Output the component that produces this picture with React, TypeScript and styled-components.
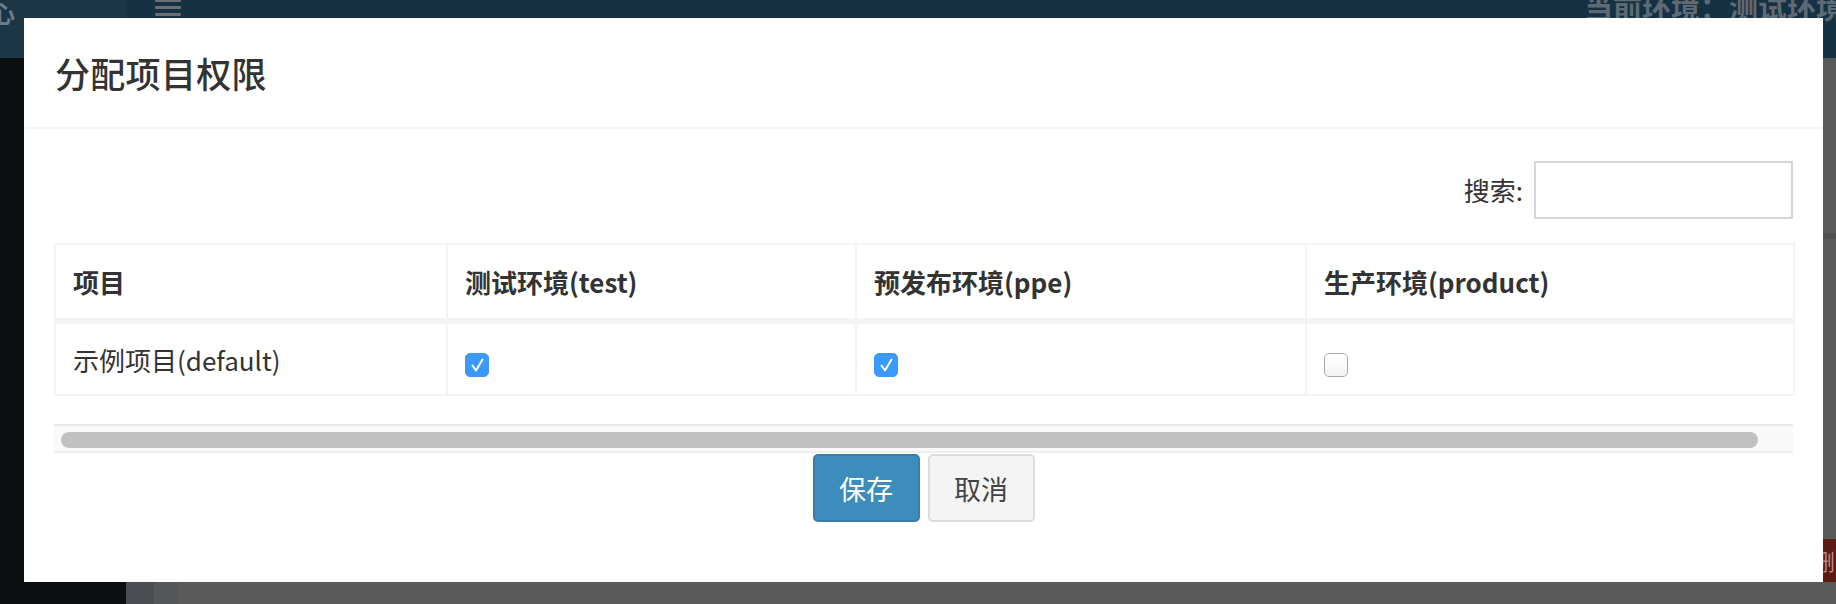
import React from "react";
import styled, { createGlobalStyle } from "styled-components";

const GlobalStyle = createGlobalStyle`
  html, body { margin: 0; padding: 0; }
  body {
    width: 1836px;
    height: 604px;
    overflow: hidden;
    background: #5a5a5a;
    font-family: "Noto Sans CJK SC", "Noto Sans", sans-serif;
  }
  * { box-sizing: border-box; }
`;

/* ---------- underlying (dimmed) application ---------- */

const Page = styled.div`
  position: relative;
  width: 1836px;
  height: 604px;
  overflow: hidden;
  display: grid;
  grid-template-rows: 58px 1fr;
`;

const Navbar = styled.header`
  display: flex;
  align-items: flex-start;
  background: #163143;
  overflow: hidden;
`;

const Logo = styled.div`
  width: 126px;
  height: 58px;
  flex: none;
  background: #1b3647;
  overflow: hidden;
  color: #6e7c86;
  font-size: 24px;
  font-weight: 700;
  line-height: 1;
  padding-top: 1px;
  span { display: inline-block; margin-left: -9px; }
`;

const Hamburger = styled.div`
  margin-left: 29px;
  width: 26px;
  flex: none;
  display: flex;
  flex-direction: column;
  gap: 4px;
  margin-top: -1px;
  i { display: block; height: 3px; border-radius: 1px; background: #6a6f73; }
`;

const EnvText = styled.div`
  margin-left: 1403px;
  margin-top: -14px;
  font-size: 29px;
  font-weight: 700;
  line-height: 40px;
  color: #5d6a73;
  white-space: nowrap;
`;

const Body = styled.div`
  display: grid;
  grid-template-columns: 126px 28px 24px 1fr;
`;

const Sidebar = styled.aside`
  background: #0b0f10;
`;

const Strip = styled.div<{ $c: string }>`
  background: ${(p) => p.$c};
`;

const Content = styled.main`
  display: flex;
  flex-direction: column;
  border-top: 1px solid #555;
`;

const PanelRow = styled.div`
  height: 180px;
  border-bottom: 6px solid #515151;
`;

const Toolbar = styled.div`
  margin-top: 300px;
  margin-right: -40px;
  display: flex;
  justify-content: flex-end;
  gap: 6px;
  border-left: 1px solid #525252;
  margin-left: 1363px;
  padding-left: 16px;
`;

const ToolButton = styled.div<{ $bg: string; $w: number }>`
  width: ${(p) => p.$w}px;
  height: 43px;
  border-radius: 5px;
  background: ${(p) => p.$bg};
  color: #b98a84;
  font-size: 22px;
  line-height: 43px;
  padding-left: 4px;
  overflow: hidden;
  white-space: nowrap;
`;

/* ---------- modal ---------- */

const Modal = styled.section`
  position: absolute;
  top: 18px;
  left: 24px;
  width: 1799px;
  height: 564px;
  background: #fff;
  display: flex;
  flex-direction: column;
`;

const ModalHeader = styled.div`
  height: 111px;
  flex: none;
  display: flex;
  align-items: center;
  padding-left: 31px;
  border-bottom: 2px solid #f4f4f4;
`;

const Title = styled.h4`
  margin: 0;
  font-size: 35px;
  font-weight: 500;
  color: #333;
  line-height: 1.2;
  letter-spacing: 0.3px;
`;

const ModalBody = styled.div`
  padding: 32px 30px 0;
  display: flex;
  flex-direction: column;
`;

const SearchRow = styled.div`
  display: flex;
  justify-content: flex-end;
  align-items: center;
  gap: 11px;
  height: 58px;
  margin-bottom: 24px;
`;

const SearchLabel = styled.label`
  font-size: 26px;
  color: #333;
  line-height: 1;
`;

const SearchInput = styled.input`
  width: 259px;
  height: 58px;
  border: 2px solid #d2d6de;
  outline: none;
  padding: 0 12px;
  font-size: 26px;
`;

const Table = styled.table`
  width: 1739px;
  table-layout: fixed;
  border-collapse: collapse;
  border: 2px solid #f4f4f4;
`;

const Th = styled.th`
  height: 77px;
  padding: 0 17px;
  text-align: left;
  font-size: 26px;
  font-weight: 700;
  color: #333;
  border: 2px solid #f4f4f4;
  border-bottom: 6px solid #f4f4f4;
  vertical-align: middle;
`;

const Td = styled.td`
  height: 74px;
  padding: 0 17px;
  font-size: 26px;
  color: #333;
  border: 2px solid #f4f4f4;
  vertical-align: middle;
`;

const Check = styled.span<{ $on: boolean }>`
  display: inline-flex;
  align-items: center;
  justify-content: center;
  width: 24px;
  height: 24px;
  margin-top: 4px;
  border-radius: 5px;
  background: ${(p) =>
    p.$on ? "#3b99fc" : "linear-gradient(#ffffff, #f4f4f4)"};
  border: 1px solid ${(p) => (p.$on ? "#3b99fc" : "#a8a8a8")};
  vertical-align: middle;
`;

const ScrollBar = styled.div`
  margin-top: 28px;
  width: 1739px;
  height: 29px;
  background: #f9f9f9;
  border-top: 2px solid #e8e8e8;
  border-bottom: 2px solid #efefef;
  padding: 6px 35px 0 7px;
`;

const Thumb = styled.div`
  height: 16px;
  border-radius: 8px;
  background: #c1c1c1;
`;

const Buttons = styled.div`
  margin-top: 1px;
  display: flex;
  justify-content: center;
  gap: 8px;
`;

const Button = styled.button<{ $primary?: boolean }>`
  width: 107px;
  height: 68px;
  border-radius: 5px;
  font-family: inherit;
  font-size: 27px;
  line-height: 1;
  cursor: pointer;
  border: 2px solid ${(p) => (p.$primary ? "#367fa9" : "#dddddd")};
  background: ${(p) => (p.$primary ? "#3c8dbc" : "#f4f4f4")};
  color: ${(p) => (p.$primary ? "#ffffff" : "#444444")};
`;

const CheckMark = () => (
  <svg width="15" height="16" viewBox="0 0 15 16" aria-hidden>
    <path
      d="M2.5 8.5 L6 13.5 L12.5 2.5"
      fill="none"
      stroke="#fff"
      strokeWidth="2"
      strokeLinecap="round"
      strokeLinejoin="round"
    />
  </svg>
);

const Checkbox = ({ checked }: { checked: boolean }) => (
  <Check $on={checked} role="checkbox" aria-checked={checked}>
    {checked && <CheckMark />}
  </Check>
);

const columns = [
  { title: "项目", width: 392 },
  { title: "测试环境(test)", width: 409 },
  { title: "预发布环境(ppe)", width: 450 },
  { title: "生产环境(product)", width: 488 },
];

const rows = [{ name: "示例项目(default)", perms: [true, true, false] }];

export default function App() {
  return (
    <>
      <GlobalStyle />
      <Page>
        <Navbar>
          <Logo>
            <span>心</span>
          </Logo>
          <Hamburger>
            <i />
            <i />
            <i />
          </Hamburger>
          <EnvText>当前环境：测试环境</EnvText>
        </Navbar>
        <Body>
          <Sidebar />
          <Strip $c="#4a4d51" />
          <Strip $c="#555658" />
          <Content>
            <PanelRow />
            <Toolbar>
              <ToolButton $bg="#4f3307" $w={72} />
              <ToolButton $bg="#4f3307" $w={167} />
              <ToolButton $bg="#5b1c15" $w={68}>
                删除
              </ToolButton>
            </Toolbar>
          </Content>
        </Body>

        <Modal role="dialog">
          <ModalHeader>
            <Title>分配项目权限</Title>
          </ModalHeader>
          <ModalBody>
            <SearchRow>
              <SearchLabel>搜索:</SearchLabel>
              <SearchInput type="search" />
            </SearchRow>
            <Table>
              <colgroup>
                {columns.map((c) => (
                  <col key={c.title} style={{ width: c.width }} />
                ))}
              </colgroup>
              <thead>
                <tr>
                  {columns.map((c) => (
                    <Th key={c.title}>{c.title}</Th>
                  ))}
                </tr>
              </thead>
              <tbody>
                {rows.map((r) => (
                  <tr key={r.name}>
                    <Td>{r.name}</Td>
                    {r.perms.map((p, i) => (
                      <Td key={i}>
                        <Checkbox checked={p} />
                      </Td>
                    ))}
                  </tr>
                ))}
              </tbody>
            </Table>
            <ScrollBar>
              <Thumb />
            </ScrollBar>
            <Buttons>
              <Button $primary>保存</Button>
              <Button>取消</Button>
            </Buttons>
          </ModalBody>
        </Modal>
      </Page>
    </>
  );
}
